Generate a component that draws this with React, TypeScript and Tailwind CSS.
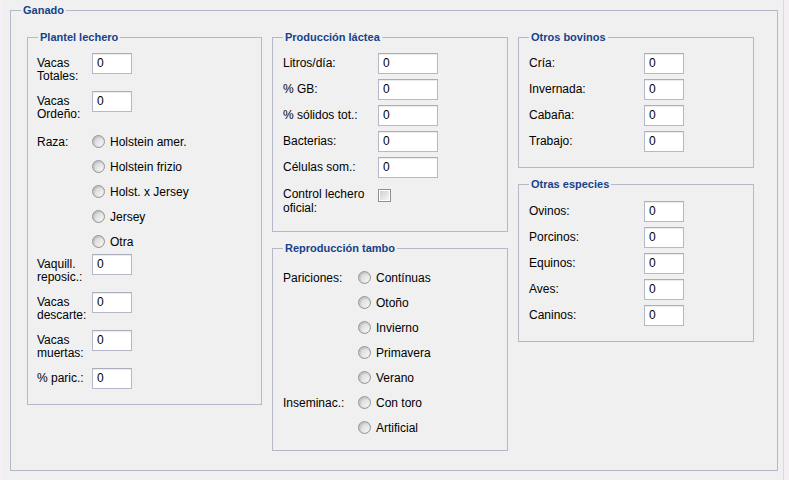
import React from "react";

function Legend({ children }: { children: React.ReactNode }) {
  return (
    <legend className="ml-[10px] px-[2px] text-[11px] font-bold leading-[14px] text-[#15428b]">
      {children}
    </legend>
  );
}

function Input({ wide }: { wide?: boolean }) {
  return (
    <div
      className={
        (wide ? "w-[60px] " : "w-[40px] ") +
        "h-[21px] shrink-0 border border-[#b5b8c8] border-t-[#a9acb9] bg-white pl-[4px] text-[12px] leading-[19px] text-black shadow-[inset_0_1px_1px_#ececec]"
      }
    >
      0
    </div>
  );
}

function Radio({ label }: { label: string }) {
  return (
    <div className="flex h-[25px] items-center">
      <div className="flex h-[13px] w-[13px] shrink-0 items-center justify-center rounded-full border border-[#959595] bg-gradient-to-br from-[#b9b9b9] to-[#f2f2f2]">
        <div className="h-[8px] w-[8px] rounded-full bg-gradient-to-br from-[#d6d6d6] to-[#f8f8f8]" />
      </div>
      <span className="ml-[5px] text-[12px] leading-[14px]">{label}</span>
    </div>
  );
}

function Row({
  label,
  colW,
  wide,
  className,
}: {
  label: React.ReactNode;
  colW: string;
  wide?: boolean;
  className?: string;
}) {
  return (
    <div className={"flex items-start " + (className ?? "")}>
      <div className={colW + " shrink-0 pt-[4px] text-[12px] leading-[13px]"}>{label}</div>
      <Input wide={wide} />
    </div>
  );
}

export default function App() {
  return (
    <div className="flex h-[480px] w-[789px] overflow-hidden bg-[#f0f0f0] font-['Liberation_Sans',Arial,sans-serif] text-black">
      <div className="w-[3px] shrink-0 bg-[#f4f0f4]" />
      <div className="w-[780px] shrink-0 pl-[7px] pt-[3px]">
        <fieldset className="h-[468px] w-[768px] border border-[#b5b8c8]">
          <Legend>Ganado</Legend>
          <div className="flex gap-[10px] pl-[16px] pt-[13px]">
            {/* Plantel lechero */}
            <fieldset className="h-[375px] w-[235px] shrink-0 border border-[#b5b8c8]">
              <Legend>Plantel lechero</Legend>
              <div className="flex flex-col pl-[9px] pt-[9px]">
                <Row colW="w-[55px]" label={<>Vacas<br />Totales:</>} />
                <Row colW="w-[55px]" className="mt-[8px]" label={<>Vacas<br />Ordeño:</>} />
                <div className="mt-[8px] flex">
                  <div className="flex h-[25px] w-[55px] shrink-0 items-center text-[12px] leading-[14px]">Raza:</div>
                  <div className="flex flex-col">
                    <Radio label="Holstein amer." />
                    <Radio label="Holstein frizio" />
                    <Radio label="Holst. x Jersey" />
                    <Radio label="Jersey" />
                    <Radio label="Otra" />
                  </div>
                </div>
                <Row colW="w-[55px]" label={<>Vaquill.<br />reposic.:</>} />
                <Row colW="w-[55px]" className="mt-[8px]" label={<>Vacas<br />descarte:</>} />
                <Row colW="w-[55px]" className="mt-[8px]" label={<>Vacas<br />muertas:</>} />
                <Row colW="w-[55px]" className="mt-[8px]" label="% paric.:" />
              </div>
            </fieldset>

            {/* Middle column */}
            <div className="flex w-[236px] shrink-0 flex-col">
              <fieldset className="h-[202px] w-[236px] border border-[#b5b8c8]">
                <Legend>Producción láctea</Legend>
                <div className="flex flex-col gap-[5px] pl-[10px] pt-[9px]">
                  <Row colW="w-[95px]" wide label="Litros/día:" />
                  <Row colW="w-[95px]" wide label="% GB:" />
                  <Row colW="w-[95px]" wide label="% sólidos tot.:" />
                  <Row colW="w-[95px]" wide label="Bacterias:" />
                  <Row colW="w-[95px]" wide label="Células som.:" />
                  <div className="flex items-start">
                    <div className="w-[95px] shrink-0 pt-[4px] text-[12px] leading-[14px]">
                      Control lechero
                      <br />
                      oficial:
                    </div>
                    <div className="mt-[6px] flex h-[13px] w-[13px] items-center justify-center border border-[#8e8f8f] bg-white">
                      <div className="h-[9px] w-[9px] bg-gradient-to-br from-[#cfd1d4] to-[#f6f6f6]" />
                    </div>
                  </div>
                </div>
              </fieldset>
              <fieldset className="mt-[9px] h-[210px] w-[236px] border border-[#b5b8c8]">
                <Legend>Reproducción tambo</Legend>
                <div className="pl-[10px] pt-[10px]">
                  <div className="flex">
                    <div className="flex h-[25px] w-[75px] shrink-0 items-center text-[12px] leading-[14px]">Pariciones:</div>
                    <div className="flex flex-col">
                      <Radio label="Contínuas" />
                      <Radio label="Otoño" />
                      <Radio label="Invierno" />
                      <Radio label="Primavera" />
                      <Radio label="Verano" />
                    </div>
                  </div>
                  <div className="flex">
                    <div className="flex h-[25px] w-[75px] shrink-0 items-center text-[12px] leading-[14px]">Inseminac.:</div>
                    <div className="flex flex-col">
                      <Radio label="Con toro" />
                      <Radio label="Artificial" />
                    </div>
                  </div>
                </div>
              </fieldset>
            </div>

            {/* Right column */}
            <div className="flex w-[236px] shrink-0 flex-col">
              <fieldset className="h-[138px] w-[236px] border border-[#b5b8c8]">
                <Legend>Otros bovinos</Legend>
                <div className="flex flex-col gap-[5px] pl-[10px] pt-[9px]">
                  <Row colW="w-[115px]" label="Cría:" />
                  <Row colW="w-[115px]" label="Invernada:" />
                  <Row colW="w-[115px]" label="Cabaña:" />
                  <Row colW="w-[115px]" label="Trabajo:" />
                </div>
              </fieldset>
              <fieldset className="mt-[9px] h-[165px] w-[236px] border border-[#b5b8c8]">
                <Legend>Otras especies</Legend>
                <div className="flex flex-col gap-[5px] pl-[10px] pt-[10px]">
                  <Row colW="w-[115px]" label="Ovinos:" />
                  <Row colW="w-[115px]" label="Porcinos:" />
                  <Row colW="w-[115px]" label="Equinos:" />
                  <Row colW="w-[115px]" label="Aves:" />
                  <Row colW="w-[115px]" label="Caninos:" />
                </div>
              </fieldset>
            </div>
          </div>
        </fieldset>
      </div>
      <div className="w-px shrink-0 bg-[#dcd8df]" />
      <div className="flex-1 bg-[#f2eef2]" />
    </div>
  );
}
